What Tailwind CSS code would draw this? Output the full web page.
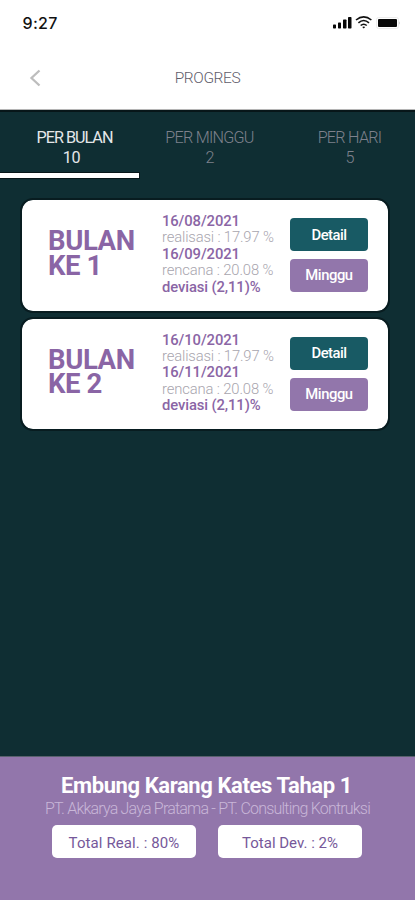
<!DOCTYPE html>
<html lang="id">
<head>
<meta charset="utf-8">
<meta name="viewport" content="width=device-width, initial-scale=1">
<title>Progres</title>
<script src="https://cdn.jsdelivr.net/npm/@tailwindcss/browser@4"></script>
</head>
<body class="w-[415px] h-[900px] overflow-hidden bg-[#0f2e33] font-[Roboto,sans-serif] flex flex-col whitespace-nowrap">
<header class="h-[110px] shrink-0 bg-white border-b border-[#b5b5b5]">
  <div class="h-[46px] pl-[22.5px] pr-[16px] flex justify-between items-center">
    <span class="font-[Inter,sans-serif] font-medium text-[16px] leading-[20px] tracking-[0.3px] text-[#111]">9:27</span>
    <svg width="72" height="16" viewBox="0 0 72 16" class="mr-[-1px]">
      <g fill="#080808"><rect x="5" y="9.5" width="3" height="4" rx=".7"/><rect x="10" y="7.5" width="3" height="6" rx=".7"/><rect x="15" y="4.5" width="3.5" height="9" rx=".7"/><rect x="20" y="2" width="3.5" height="11.5" rx=".7"/><rect x="50" y="4" width="19" height="8" rx="1"/></g>
      <g fill="none" stroke="#111" stroke-width="1.6"><path d="M28 5Q35.7-1.2 43.4 5M30.4 7.8Q35.7 3.2 41 7.8"/></g>
      <path d="M32.1 9.9Q35.7 6.9 39.3 9.9L38.2 11Q35.7 9 33.2 11ZM34.2 12Q35.7 10.8 37.2 12L35.7 13.6Z" fill="#111"/>
      <rect x="48.5" y="2.5" width="22" height="11" rx="2" fill="none" stroke="#ececec"/><path d="M72 6.2q-1.5 1.8 0 3.6z" fill="#bbb"/>
    </svg>
  </div>
  <div class="h-[63px] grid grid-cols-[1fr_auto_1fr] items-center">
    <svg class="ml-[29px]" width="13" height="18" viewBox="0 0 13 18" fill="none" stroke="#bdbdbd" stroke-width="2.3"><path d="M10.5 1.5L2.5 9L10.5 16.5"/></svg>
    <h1 class="text-[15.5px] leading-[18px] font-light tracking-[-0.4px] text-[#5f5d6b]">PROGRES</h1>
  </div>
</header>
<nav class="h-[69px] shrink-0 border-t-2 border-[#071619] text-[16.2px] leading-[20px] tracking-[-0.75px] text-center text-[#7e818c] flex">
  <div class="w-[140px] pt-[15.5px] pl-[9px] text-[#e4e7e9] flex flex-col"><span class="tracking-[-1px]">PER BULAN</span><span class="pr-[6px] tracking-[-0.4px]">10</span><i class="mt-auto ml-[-9px] mb-[1px] w-[139px] h-[5px] bg-white outline-1 outline-[#071619]"></i></div>
  <div class="w-[139px] pt-[15.5px] flex flex-col"><span class="font-light">PER MINGGU</span><span class="font-light">2</span></div>
  <div class="w-[136px] pt-[15.5px] pl-[5px] flex flex-col"><span class="font-light">PER HARI</span><span class="font-light">5</span></div>
</nav>
<main class="flex-1 pt-[21px] pl-[22px] flex flex-col gap-[8px]">
  <section class="w-[366px] h-[110.5px] shrink-0 rounded-[11px] bg-white outline-2 outline-[#081c20] flex text-[#8a65a5]">
    <h2 class="w-[140px] pl-[26px] pt-[29px] text-[27.5px] leading-[24.5px] font-bold tracking-[-0.4px]">BULAN<br>KE 1</h2>
    <div class="w-[128px] pt-[13px] text-[14.8px] leading-[16.4px] font-medium tracking-[-0.1px]"><p>16/08/2021</p><p class="font-light tracking-[-0.15px] text-[#a8a5ae]">realisasi : 17.97 %</p><p>16/09/2021</p><p class="font-light tracking-[-0.13px] text-[#a8a5ae]">rencana : 20.08 %</p><p>deviasi (2,11)%</p></div>
    <div class="pt-[18px] flex flex-col gap-[8px] text-white text-[14.8px] font-medium tracking-[-0.5px]"><button class="w-[78px] h-[33px] pt-[1px] rounded-[4px] bg-[#185a64]">Detail</button><button class="w-[78px] h-[33px] rounded-[4px] bg-[#9276ab] tracking-[-0.45px]">Minggu</button></div>
  </section>
  <section class="w-[366px] h-[110.5px] shrink-0 rounded-[11px] bg-white outline-2 outline-[#081c20] flex text-[#8a65a5]">
    <h2 class="w-[140px] pl-[26px] pt-[29px] text-[27.5px] leading-[24.5px] font-bold tracking-[-0.4px]">BULAN<br>KE 2</h2>
    <div class="w-[128px] pt-[13px] text-[14.8px] leading-[16.4px] font-medium tracking-[-0.1px]"><p>16/10/2021</p><p class="font-light tracking-[-0.15px] text-[#a8a5ae]">realisasi : 17.97 %</p><p>16/11/2021</p><p class="font-light tracking-[-0.13px] text-[#a8a5ae]">rencana : 20.08 %</p><p>deviasi (2,11)%</p></div>
    <div class="pt-[18px] flex flex-col gap-[8px] text-white text-[14.8px] font-medium tracking-[-0.5px]"><button class="w-[78px] h-[33px] pt-[1px] rounded-[4px] bg-[#185a64]">Detail</button><button class="w-[78px] h-[33px] rounded-[4px] bg-[#9276ab] tracking-[-0.45px]">Minggu</button></div>
  </section>
</main>
<footer class="h-[144px] shrink-0 pt-[16px] border-t border-[#59616e] bg-[#9276ab] text-center">
  <h2 class="text-[22px] leading-[25px] font-bold tracking-[-0.4px] text-white pr-[2px]">Embung Karang Kates Tahap 1</h2>
  <p class="text-[16px] leading-[21px] font-light tracking-[-0.8px] text-[#c9b7d8]">PT. Akkarya Jaya Pratama - PT. Consulting Kontruksi</p>
  <div class="mt-[6px] pr-[1px] flex justify-center gap-[22px] text-[15px] leading-[36px] text-[#76589a]"><div class="w-[144px] h-[33px] rounded-[5px] bg-white tracking-[0.1px]">Total Real. : 80%</div><div class="w-[144px] h-[33px] rounded-[5px] bg-white">Total Dev. : 2%</div></div>
</footer>
</body>
</html>
